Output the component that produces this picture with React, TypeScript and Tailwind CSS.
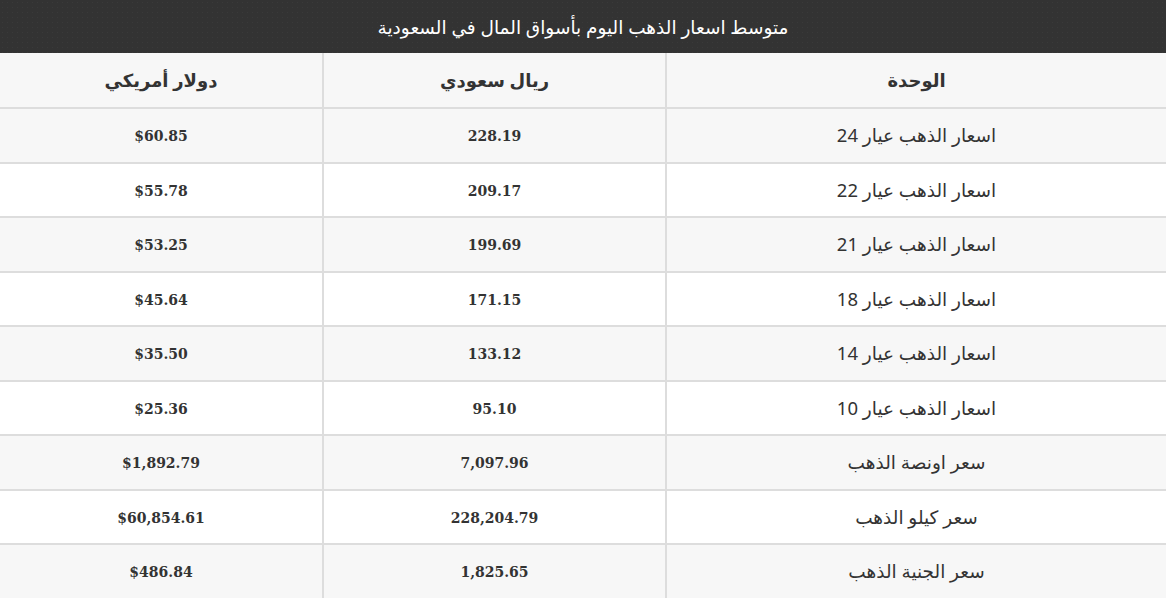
import React from "react";

const rows: [string, string, string][] = [
  ["اسعار الذهب عيار 24", "228.19", "$60.85"],
  ["اسعار الذهب عيار 22", "209.17", "$55.78"],
  ["اسعار الذهب عيار 21", "199.69", "$53.25"],
  ["اسعار الذهب عيار 18", "171.15", "$45.64"],
  ["اسعار الذهب عيار 14", "133.12", "$35.50"],
  ["اسعار الذهب عيار 10", "95.10", "$25.36"],
  ["سعر اونصة الذهب", "7,097.96", "$1,892.79"],
  ["سعر كيلو الذهب", "228,204.79", "$60,854.61"],
  ["سعر الجنية الذهب", "1,825.65", "$486.84"],
];

export default function App() {
  return (
    <div dir="rtl" className="w-[1166px] bg-white text-[#333]" style={{ fontFamily: '"Noto Sans", "DejaVu Sans", sans-serif' }}>
      <div className="h-[53px] bg-[#333333] bg-[radial-gradient(circle,#3a3a3a_0.7px,transparent_1px)] bg-[length:5px_5px] flex items-center justify-center text-white text-[18.5px]">
        متوسط اسعار الذهب اليوم بأسواق المال في السعودية
      </div>
      <table className="w-full border-collapse table-fixed">
        <colgroup>
          <col className="w-[500px]" />
          <col className="w-[343px]" />
          <col className="w-[323px]" />
        </colgroup>
        <thead>
          <tr className="bg-[#f7f7f7] h-[55px]">
            <th className="border-b-2 border-l-2 border-[#dddddd] text-[18px] font-bold text-center">الوحدة</th>
            <th className="border-b-2 border-l-2 border-[#dddddd] text-[18px] font-bold text-center">ريال سعودي</th>
            <th className="border-b-2 border-[#dddddd] text-[18px] font-bold text-center">دولار أمريكي</th>
          </tr>
        </thead>
        <tbody>
          {rows.map((r, i) => (
            <tr key={i} className={(i % 2 === 0 ? "bg-[#f7f7f7]" : "bg-white") + " h-[54.5px]"}>
              <td className="border-b-2 border-l-2 border-[#dddddd] text-center text-[18.5px]">{r[0]}</td>
              <td className="border-b-2 border-l-2 border-[#dddddd] text-center text-[14px] font-bold text-[#333] pt-[3px]" style={{ fontFamily: '"DejaVu Serif", serif' }}>
                <span dir="ltr">{r[1]}</span>
              </td>
              <td className="border-b-2 border-[#dddddd] text-center text-[14px] font-bold text-[#333] pt-[3px]" style={{ fontFamily: '"DejaVu Serif", serif' }}>
                <span dir="ltr">{r[2]}</span>
              </td>
            </tr>
          ))}
        </tbody>
      </table>
    </div>
  );
}
